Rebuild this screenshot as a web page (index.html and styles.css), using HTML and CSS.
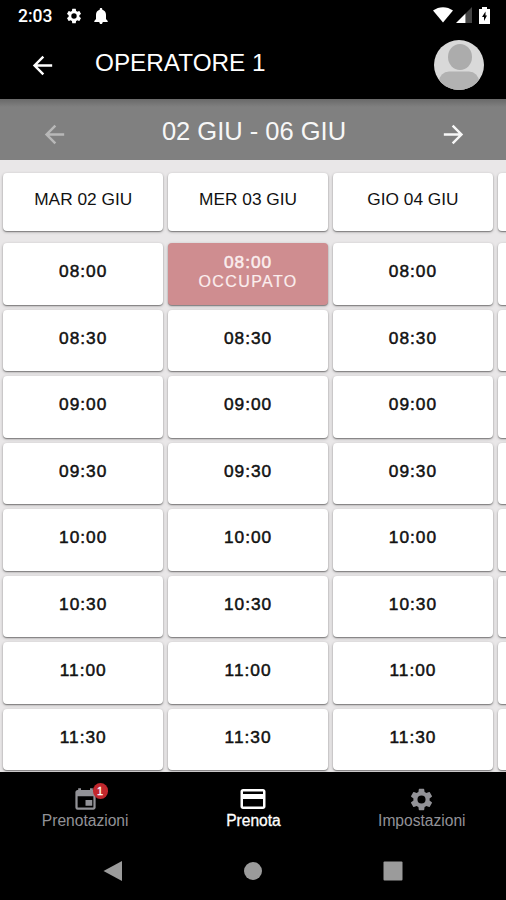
FILE: index.html
```html
<!DOCTYPE html>
<html lang="it">
<head>
    <meta charset="utf-8" />
    <title>Operatore 1</title>
    <link rel="stylesheet" href="styles.css">
</head>
<body>
    <svg class="sprite">
        <symbol id="gear" viewBox="0 0 24 24">
            <path d="M19.14 12.94c.04-.3.06-.61.06-.94s-.02-.64-.07-.94l2.03-1.58a.49.49 0 0 0 .12-.61l-1.92-3.32a.49.49 0 0 0-.59-.22l-2.39.96c-.5-.38-1.03-.7-1.62-.94l-.36-2.54a.48.48 0 0 0-.48-.41h-3.84a.47.47 0 0 0-.47.41l-.36 2.54c-.59.24-1.13.57-1.62.94l-2.39-.96a.48.48 0 0 0-.59.22L2.74 8.87c-.12.21-.08.47.12.61l2.03 1.58c-.05.3-.09.63-.09.94s.02.64.07.94l-2.03 1.58a.49.49 0 0 0-.12.61l1.92 3.32c.12.22.37.29.59.22l2.39-.96c.5.38 1.03.7 1.62.94l.36 2.54c.05.24.24.41.48.41h3.84c.24 0 .44-.17.47-.41l.36-2.54c.59-.24 1.13-.56 1.62-.94l2.39.96c.22.08.47 0 .59-.22l1.92-3.32a.47.47 0 0 0-.12-.61zM12 15.6a3.6 3.6 0 1 1 0-7.2 3.6 3.6 0 0 1 0 7.2z"/>
        </symbol>
        <symbol id="arrow" viewBox="0 0 24 24">
            <path d="M20 11H7.83l5.59-5.59L12 4l-8 8 8 8 1.41-1.41L7.83 13H20z"/>
        </symbol>
    </svg>

    <div class="status-bar">
        <span class="clock">2:03</span>
        <svg class="status-gear"><use href="#gear"/></svg>
        <svg class="status-bell" viewBox="0 0 14 16"><path d="M7 0c.8 0 1.300.5 1.300 1.300v.5C10.600 2.400 12 4.300 12 6.700v4.300l1.700 2v1H.3v-1L2 11V6.700c0-2.400 1.400-4.300 3.700-4.900v-.5C5.700.5 6.200 0 7 0zM5.300 14h3.400C8.600 15.500 7.900 16 7 16s-1.600-.5-1.700-2z"/></svg>
        <div class="status-right">
            <svg width="20" height="16" viewBox="0 0 20 16"><path d="M0 3.500C6-1 14-1 20 3.500L10 15.500z"/></svg>
            <svg width="16" height="16" viewBox="0 0 16 16"><path class="dim" d="M9.500 6.500 16 0v16H9.500z"/><path d="M0 16 9.500 6.500V16z"/></svg>
            <svg class="battery" width="11" height="17" viewBox="0 0 11 17"><path d="M3 0h5v2h3v15H0V2h3z"/><path class="bolt" d="M6.500 4.500 3 10h2v4l3-5.500H6.500z"/></svg>
        </div>
    </div>

    <div class="header">
        <svg class="arrow"><use href="#arrow"/></svg>
        <h1>OPERATORE 1</h1>
        <svg class="avatar" viewBox="0 0 50 50">
            <clipPath id="round"><circle cx="25" cy="25" r="25"/></clipPath>
            <g clip-path="url(#round)">
                <rect width="50" height="50" fill="#d9d9d9"/>
                <ellipse cx="26" cy="17" rx="12" ry="13" fill="#acacac"/>
                <rect x="5" y="31.500" width="40" height="30" rx="10" fill="#b2b2b2"/>
            </g>
        </svg>
    </div>

    <div class="week">
        <svg class="arrow disabled"><use href="#arrow"/></svg>
        <h2>02 GIU - 06 GIU</h2>
        <svg class="arrow next"><use href="#arrow"/></svg>
    </div>

    <div class="calendar">
        <div class="day">
            <div class="card day-name">MAR 02 GIU</div>
            <div class="card slot">08:00</div>
            <div class="card slot">08:30</div>
            <div class="card slot">09:00</div>
            <div class="card slot">09:30</div>
            <div class="card slot">10:00</div>
            <div class="card slot">10:30</div>
            <div class="card slot">11:00</div>
            <div class="card slot">11:30</div>
        </div>
        <div class="day">
            <div class="card day-name">MER 03 GIU</div>
            <div class="card slot busy">08:00<span>OCCUPATO</span></div>
            <div class="card slot">08:30</div>
            <div class="card slot">09:00</div>
            <div class="card slot">09:30</div>
            <div class="card slot">10:00</div>
            <div class="card slot">10:30</div>
            <div class="card slot">11:00</div>
            <div class="card slot">11:30</div>
        </div>
        <div class="day">
            <div class="card day-name">GIO 04 GIU</div>
            <div class="card slot">08:00</div>
            <div class="card slot">08:30</div>
            <div class="card slot">09:00</div>
            <div class="card slot">09:30</div>
            <div class="card slot">10:00</div>
            <div class="card slot">10:30</div>
            <div class="card slot">11:00</div>
            <div class="card slot">11:30</div>
        </div>
        <!-- next day, only its edge is in view -->
        <div class="day">
            <div class="card day-name"></div>
            <div class="card slot"></div>
            <div class="card slot"></div>
            <div class="card slot"></div>
            <div class="card slot"></div>
            <div class="card slot"></div>
            <div class="card slot"></div>
            <div class="card slot"></div>
            <div class="card slot"></div>
        </div>
    </div>

    <div class="tabs">
        <div class="tab">
            <div class="tab-icon">
                <svg viewBox="0 0 24 24"><path d="M18 12.500h-6v5h6v-5zM16 2v1.500H8V2H5.500v1.500H5c-1.110 0-2 .9-2 2V19a2 2 0 0 0 2 2h14c1.100 0 2-.9 2-2V5.500c0-1.100-.9-2-2-2h-.5V2H16zm3 17H5V9h14v10z"/></svg>
                <span class="badge">1</span>
            </div>
            Prenotazioni
        </div>
        <div class="tab active">
            <div class="tab-icon">
                <svg viewBox="0 0 24 24"><path d="M20 4H4c-1.110 0-1.990.89-1.990 2L2 18c0 1.110.89 2 2 2h16c1.110 0 2-.89 2-2V6c0-1.110-.89-2-2-2zm0 14H4v-6h16v6zm0-10H4V6h16v2z"/></svg>
            </div>
            Prenota
        </div>
        <div class="tab">
            <div class="tab-icon">
                <svg viewBox="0 0 24 24"><use href="#gear"/></svg>
            </div>
            Impostazioni
        </div>
    </div>

    <div class="nav-bar">
        <svg viewBox="0 0 20 20"><path d="M.5 10 19 0v20z"/></svg>
        <svg viewBox="0 0 20 20"><circle cx="10" cy="10" r="9"/></svg>
        <svg viewBox="0 0 20 20"><rect x=".5" y=".5" width="19" height="19" rx="1"/></svg>
    </div>
</body>
</html>
```
FILE: styles.css
```css
* {
    box-sizing: border-box;
}
body {
    margin: 0;
    height: 900px;
    display: flex;
    flex-direction: column;
    overflow: hidden;
    background: #000;
    font-family: "Liberation Sans", Arial, sans-serif;
}
svg {
    fill: currentColor;
    flex: none;
}
.sprite {
    display: none;
}

.status-bar {
    display: flex;
    align-items: center;
    height: 32px;
    padding: 0 16px 0 18px;
    color: #fff;
}
.clock {
    width: 47px;
    font: 500 17.5px Roboto, sans-serif;
}
.status-gear {
    width: 18px;
    height: 18px;
}
.status-bell {
    width: 14px;
    height: 16px;
    margin-left: 11px;
}
.status-right {
    display: flex;
    align-items: center;
    gap: 3px;
    margin-left: auto;
    padding-bottom: 2px;
}
.battery {
    margin-left: 4px;
}
.dim {
    fill: #444;
}
.bolt {
    fill: #000;
}

.header {
    display: flex;
    align-items: center;
    height: 67px;
    padding: 0 22px 1px 28px;
    color: #fff;
}
.header h1 {
    margin: 0 auto 4px 38px;
    font-size: 24.300px;
    font-weight: normal;
}
.arrow {
    width: 29px;
    height: 29px;
}
.avatar {
    width: 50px;
    height: 50px;
}

.week {
    display: flex;
    align-items: center;
    justify-content: space-between;
    height: 61px;
    padding: 9px 38px 0 40px;
    background: linear-gradient(#696969, #808080 8px);
    color: #f7f7f7;
}
.week h2 {
    margin: 0 0 6px;
    font-size: 25.500px;
    font-weight: normal;
}
.disabled {
    color: #b8b8b8;
}
.next {
    transform: scaleX(-1);
}

.calendar {
    display: flex;
    gap: 4.500px;
    height: 612px;
    padding: 13px 3px 0;
    overflow: hidden;
    background: #e9e7e8;
}
.day {
    flex: none;
    width: 160.400px;
}
.card {
    display: flex;
    flex-direction: column;
    align-items: center;
    justify-content: center;
    border-radius: 4px;
    background: #fff;
    box-shadow: 0 1px 3px rgba(0, 0, 0, .3), 0 1px 1px rgba(0, 0, 0, .3);
    color: #111;
}
.day-name {
    height: 58px;
    margin-bottom: 12px;
    padding-bottom: 5px;
    font-size: 17.300px;
}
.slot {
    height: 61.500px;
    margin-bottom: 5px;
    padding-bottom: 5px;
    font-size: 17.300px;
    line-height: 20px;
    letter-spacing: 1px;
    -webkit-text-stroke: .5px;
}
.busy {
    background: #cf8d90;
    color: #fbeeee;
    padding-bottom: 4px;
}
.busy span {
    font-size: 16px;
    letter-spacing: 1.400px;
    -webkit-text-stroke: .2px;
}

.tabs {
    display: flex;
    height: 70px;
    padding-left: 1px;
    color: #929297;
    font-size: 15.600px;
}
.tab {
    flex: 1;
    display: flex;
    flex-direction: column;
    align-items: center;
    padding-top: 14px;
}
.tab-icon {
    display: flex;
    align-items: center;
    position: relative;
    height: 26px;
}
.tab-icon svg {
    width: 27px;
    height: 27px;
}
.tab-icon .badge {
    position: absolute;
    top: -3px;
    left: 21px;
    width: 15px;
    height: 16px;
    border-radius: 8px;
    background: #c1272d;
    color: #fff;
    font-size: 11px;
    line-height: 16px;
    text-align: center;
    -webkit-text-stroke: .3px;
}
.active {
    color: #fff;
    -webkit-text-stroke: .3px;
}
.active svg {
    width: 30px;
    height: 30px;
}

.nav-bar {
    display: flex;
    align-items: center;
    justify-content: space-between;
    height: 58px;
    padding: 0 103px;
    color: #9b9b9b;
}
.nav-bar svg {
    width: 20px;
    height: 20px;
}
```
